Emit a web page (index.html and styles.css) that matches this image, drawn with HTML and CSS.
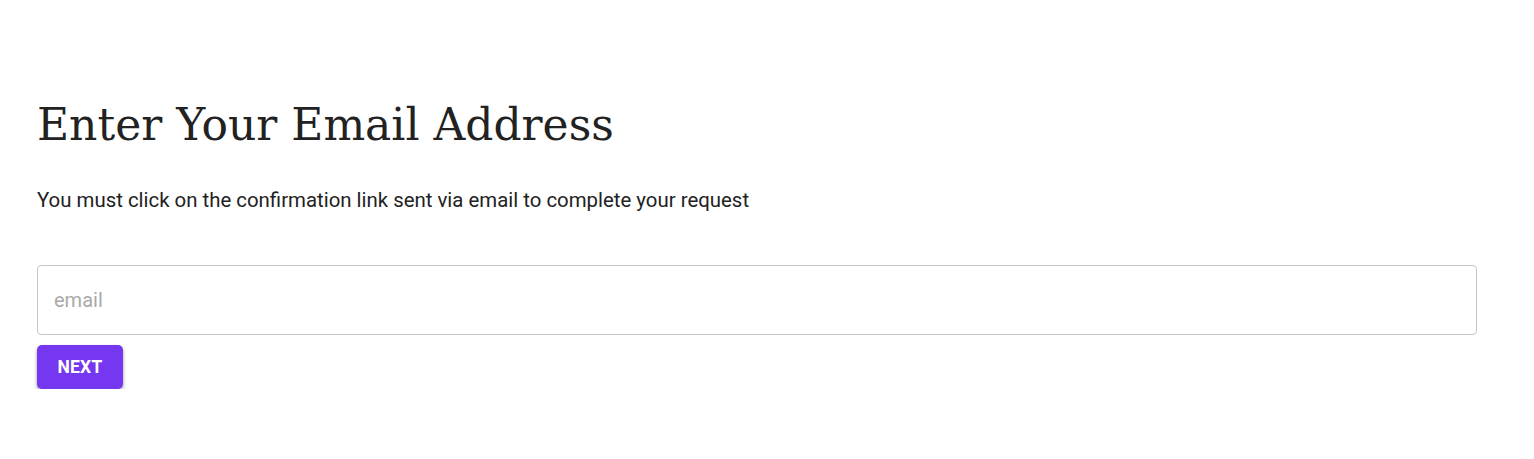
FILE: index.html
```html
<!DOCTYPE html>
<html lang="en">
<head>
<meta charset="utf-8">
<title>Enter Your Email Address</title>
<link rel="stylesheet" href="styles.css">
</head>
<body>
<main class="page">
  <h1 class="title">Enter Your Email Address</h1>
  <p class="lead">You must click on the confirmation link sent via email to complete your request</p>
  <form class="form">
    <input class="field" type="email" placeholder="email">
    <button class="btn" type="button">NEXT</button>
  </form>
</main>
</body>
</html>
```
FILE: styles.css
```css
* { box-sizing: border-box; }
html, body { margin: 0; background: #fff; }
.page {
  padding: 94px 57px 0 37px;
  font-family: Roboto, "Noto Sans", sans-serif;
  color: #212121;
}
.title {
  margin: 0;
  font-family: "DejaVu Serif", "Liberation Serif", serif;
  font-weight: 400;
  font-size: 44px;
  line-height: 62px;
  color: #222;
}
.lead {
  margin: 32px 0 0;
  font-size: 20.4px;
  line-height: 24px;
  color: #222;
}
.form {
  margin-top: 53px;
  display: flex;
  flex-direction: column;
  align-items: flex-start;
  gap: 10px;
}
.field {
  width: 100%;
  height: 70px;
  border: 1px solid #c4c4c4;
  border-radius: 4px;
  padding: 0 16px;
  font-family: Roboto, sans-serif;
  font-size: 20px;
  color: #222;
  outline: none;
}
.field::placeholder { color: #a9a9a9; }
.btn {
  width: 86px;
  height: 44px;
  border: none;
  border-radius: 5px;
  background: #7537f0;
  color: #fff;
  font-family: Roboto, sans-serif;
  font-weight: 700;
  font-size: 17.5px;
  letter-spacing: 0.2px;
  box-shadow: 0 3px 4px rgba(0,0,0,0.22), 0 1px 3px rgba(0,0,0,0.2);
  cursor: pointer;
}
```
